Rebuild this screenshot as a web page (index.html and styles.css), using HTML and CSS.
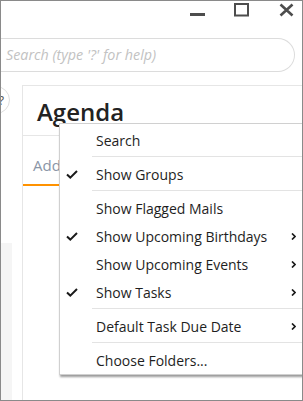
FILE: index.html
```html
<!DOCTYPE html>
<html lang="en">
<head>
    <meta charset="UTF-8">
    <title>Agenda</title>
    <link rel="stylesheet" href="styles.css">
</head>
<body>

    <div class="window">
        <div class="titlebar">
            <svg class="win-btn" width="15" height="14" viewBox="0 0 15 14"><rect x="0" y="10" width="15" height="3" fill="#4d4d4d"/></svg>
            <svg class="win-btn" width="15" height="14" viewBox="0 0 15 14"><rect x="1" y="1" width="13" height="11.5" fill="none" stroke="#4d4d4d" stroke-width="2"/></svg>
            <svg class="win-btn close" width="15" height="14" viewBox="0 0 15 14"><path d="M1.5 1.5 L13.5 12.5 M13.5 1.5 L1.5 12.5" stroke="#4d4d4d" stroke-width="2.6"/></svg>
        </div>

        <div class="search-row">
            <div class="search-box">Search (type '?' for help)</div>
        </div>

        <div class="main">
            <div class="side">
                <div class="help-btn">?</div>
                <div class="side-strip"></div>
            </div>
            <div class="content">
                <div class="content-header">
                    <h1>Agenda</h1>
                </div>
                <div class="tabs">
                    <div class="tab active">Add</div>
                </div>
            </div>
        </div>

        <!-- context menu over the agenda -->
        <div class="context-menu">
            <div class="menu-item"><span class="check"></span><span class="label">Search</span></div>
            <div class="menu-sep"></div>
            <div class="menu-item"><span class="check"><svg width="12" height="9" viewBox="0 0 12 9"><polyline points="1,4.5 4.3,7.6 11,1" fill="none" stroke="#1a1a1a" stroke-width="2"/></svg></span><span class="label">Show Groups</span></div>
            <div class="menu-sep"></div>
            <div class="menu-item"><span class="check"></span><span class="label">Show Flagged Mails</span></div>
            <div class="menu-item"><span class="check"><svg width="12" height="9" viewBox="0 0 12 9"><polyline points="1,4.5 4.3,7.6 11,1" fill="none" stroke="#1a1a1a" stroke-width="2"/></svg></span><span class="label">Show Upcoming Birthdays</span><span class="arrow"><svg width="5" height="7" viewBox="0 0 5 7"><polyline points="1,0.5 4,3.5 1,6.5" fill="none" stroke="#1a1a1a" stroke-width="1.7"/></svg></span></div>
            <div class="menu-item"><span class="check"></span><span class="label">Show Upcoming Events</span><span class="arrow"><svg width="5" height="7" viewBox="0 0 5 7"><polyline points="1,0.5 4,3.5 1,6.5" fill="none" stroke="#1a1a1a" stroke-width="1.7"/></svg></span></div>
            <div class="menu-item"><span class="check"><svg width="12" height="9" viewBox="0 0 12 9"><polyline points="1,4.5 4.3,7.6 11,1" fill="none" stroke="#1a1a1a" stroke-width="2"/></svg></span><span class="label">Show Tasks</span><span class="arrow"><svg width="5" height="7" viewBox="0 0 5 7"><polyline points="1,0.5 4,3.5 1,6.5" fill="none" stroke="#1a1a1a" stroke-width="1.7"/></svg></span></div>
            <div class="menu-sep"></div>
            <div class="menu-item"><span class="check"></span><span class="label">Default Task Due Date</span><span class="arrow"><svg width="5" height="7" viewBox="0 0 5 7"><polyline points="1,0.5 4,3.5 1,6.5" fill="none" stroke="#1a1a1a" stroke-width="1.7"/></svg></span></div>
            <div class="menu-sep"></div>
            <div class="menu-item"><span class="check"></span><span class="label">Choose Folders...</span></div>
        </div>
    </div>

</body>
</html>
```

FILE: styles.css
```css
body {
    margin: 0;
    font-family: "Open Sans", "Noto Sans", sans-serif;
    background-color: #fff;
    color: #222;
}

.window {
    position: relative;
    width: 303px;
    height: 401px;
    box-sizing: border-box;
    border: 1px solid #8a8a8a;
    overflow: hidden;
    display: flex;
    flex-direction: column;
    background-color: #fff;
}

.titlebar {
    height: 21px;
    display: flex;
    justify-content: flex-end;
    align-items: flex-start;
    gap: 29px;
    padding: 2px 8px 0 0;
    box-sizing: border-box;
}

.win-btn {
    display: block;
}

.win-btn.close {
    margin-left: 1px;
}

.search-row {
    margin-top: 16px;
    padding-right: 7px;
}

.search-box {
    height: 34px;
    box-sizing: border-box;
    border: 1px solid #dcdcdc;
    border-left: none;
    border-radius: 0 17px 17px 0;
    padding-left: 5px;
    line-height: 32px;
    font-size: 14.3px;
    font-style: italic;
    color: #c2c2c2;
}

.main {
    flex: 1;
    margin-top: 13px;
    display: flex;
}

.side {
    width: 21px;
    display: flex;
    flex-direction: column;
    overflow: hidden;
}

.help-btn {
    width: 28px;
    height: 28px;
    margin: 1px 0 0 -19px;
    box-sizing: border-box;
    border: 1px solid #dedede;
    border-radius: 50%;
    text-align: right;
    padding-right: 5px;
    line-height: 26px;
    font-size: 13px;
    color: #555;
}

.side-strip {
    margin-top: auto;
    width: 11px;
    height: 157px;
    background-color: #f5f5f5;
}

.content {
    flex: 1;
    border-left: 1px solid #e6e6e6;
    border-top: 1px solid #e6e6e6;
}

.content-header {
    height: 49px;
    border-bottom: 1px solid #e6e6e6;
}

.content-header h1 {
    margin: 0;
    padding: 10px 0 0 14px;
    font-size: 24px;
    font-weight: 600;
    line-height: 32px;
    color: #222;
}

.tabs {
    display: flex;
}

.tab {
    width: 50px;
    padding: 19px 0 9px 10px;
    line-height: 20px;
    font-size: 15px;
    color: #8a95a6;
}

.tab.active {
    border-bottom: 2px solid #ff9200;
}

.context-menu {
    position: absolute;
    left: 58px;
    top: 122px;
    width: 250px;
    box-sizing: border-box;
    background-color: #fff;
    border: 1px solid #d0d0d0;
    padding-top: 2px;
    box-shadow: 1px 2px 2px rgba(0, 0, 0, 0.4);
}

.menu-item {
    display: flex;
    align-items: center;
    height: 28px;
    padding-right: 12px;
    font-size: 14px;
    color: #1e1e1e;
}

.check {
    width: 36px;
    flex: none;
    display: flex;
    padding-left: 6px;
    box-sizing: border-box;
}

.check svg,
.arrow svg {
    display: block;
}

.label {
    flex: 1;
}

.arrow {
    width: 5px;
}

.menu-sep {
    height: 1px;
    margin: 2px 0 3px 32px;
    background-color: #e3e3e3;
}
```
